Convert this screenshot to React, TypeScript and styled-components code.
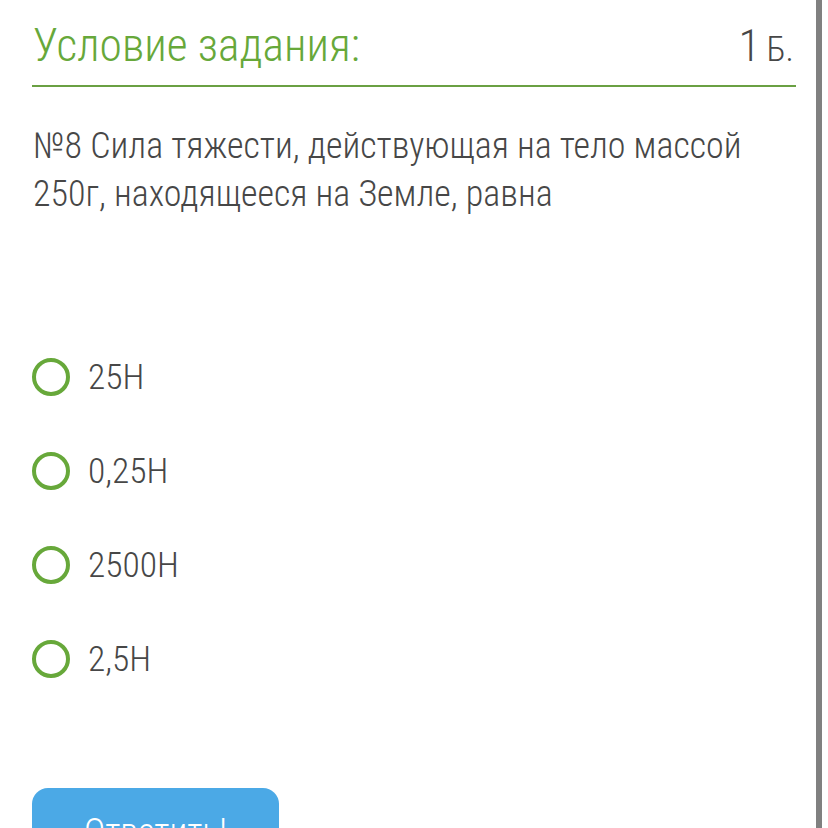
import * as React from 'react'
import styled, {createGlobalStyle} from 'styled-components'

const Colors = {
  green: '#67a83a',
  line: '#6aa043',
  text: '#474747',
  blue: '#4ba9e6',
  scroll: '#808080'
}

const GlobalStyle = createGlobalStyle`
  html, body {
    margin: 0;
    padding: 0;
    background: #fff;
    overflow: hidden;
  }
  body {
    font-family: Roboto, "Noto Sans", sans-serif;
    font-stretch: 75%;
    font-weight: 300;
    color: ${Colors.text};
  }
`

const Page = styled.div`
  width: 828px;
  height: 828px;
  padding: 0 32px;
  box-sizing: border-box;
  overflow: hidden;
`

const Content = styled.div`
  width: 764px;
`

const Header = styled.div`
  display: flex;
  justify-content: space-between;
  align-items: baseline;
  padding-top: 22px;
  height: 87px;
  box-sizing: border-box;
  border-bottom: 2px solid ${Colors.line};
`

const Title = styled.div`
  font-size: 45.5px;
  line-height: 48px;
  color: ${Colors.green};
  padding-left: 1px;
`

const Score = styled.div`
  font-size: 45px;
  line-height: 48px;
  color: ${Colors.text};
  padding-right: 2px;

  span {
    font-size: 35px;
    margin-left: 6px;
  }
`

const Question = styled.p`
  margin: 35px 0 0 1px;
  font-size: 36px;
  line-height: 48px;
`

const Options = styled.div`
  display: flex;
  flex-direction: column;
  gap: 56px;
  margin-top: 140px;
`

const Option = styled.label`
  display: flex;
  align-items: center;
  gap: 18px;
  height: 38px;
  font-size: 35.5px;
`

const Radio = styled.span`
  width: 38px;
  height: 38px;
  box-sizing: border-box;
  border: 4px solid ${Colors.green};
  border-radius: 50%;
  flex: none;
`

const Button = styled.div`
  display: inline-flex;
  justify-content: center;
  margin-top: 110px;
  width: 247px;
  height: 60px;
  padding-top: 24px;
  box-sizing: border-box;
  border-radius: 16px;
  background: ${Colors.blue};
  color: #fff;
  font-size: 36px;
  line-height: 40px;
`

const Scrollbar = styled.div`
  position: fixed;
  top: 0;
  bottom: 0;
  left: 816px;
  width: 6px;
  background: ${Colors.scroll};
`

const answers = ['25Н', '0,25Н', '2500Н', '2,5Н']

export default function App() {
  return (
    <Page>
      <GlobalStyle />
      <Content>
        <Header>
          <Title>Условие задания:</Title>
          <Score>1<span>Б.</span></Score>
        </Header>
        <Question>
          №8 Сила тяжести, действующая на тело массой 250г, находящееся на Земле, равна
        </Question>
        <Options>
          {answers.map(a => (
            <Option key={a}>
              <Radio />
              {a}
            </Option>
          ))}
        </Options>
        <Button>Ответить!</Button>
      </Content>
      <Scrollbar />
    </Page>
  )
}
